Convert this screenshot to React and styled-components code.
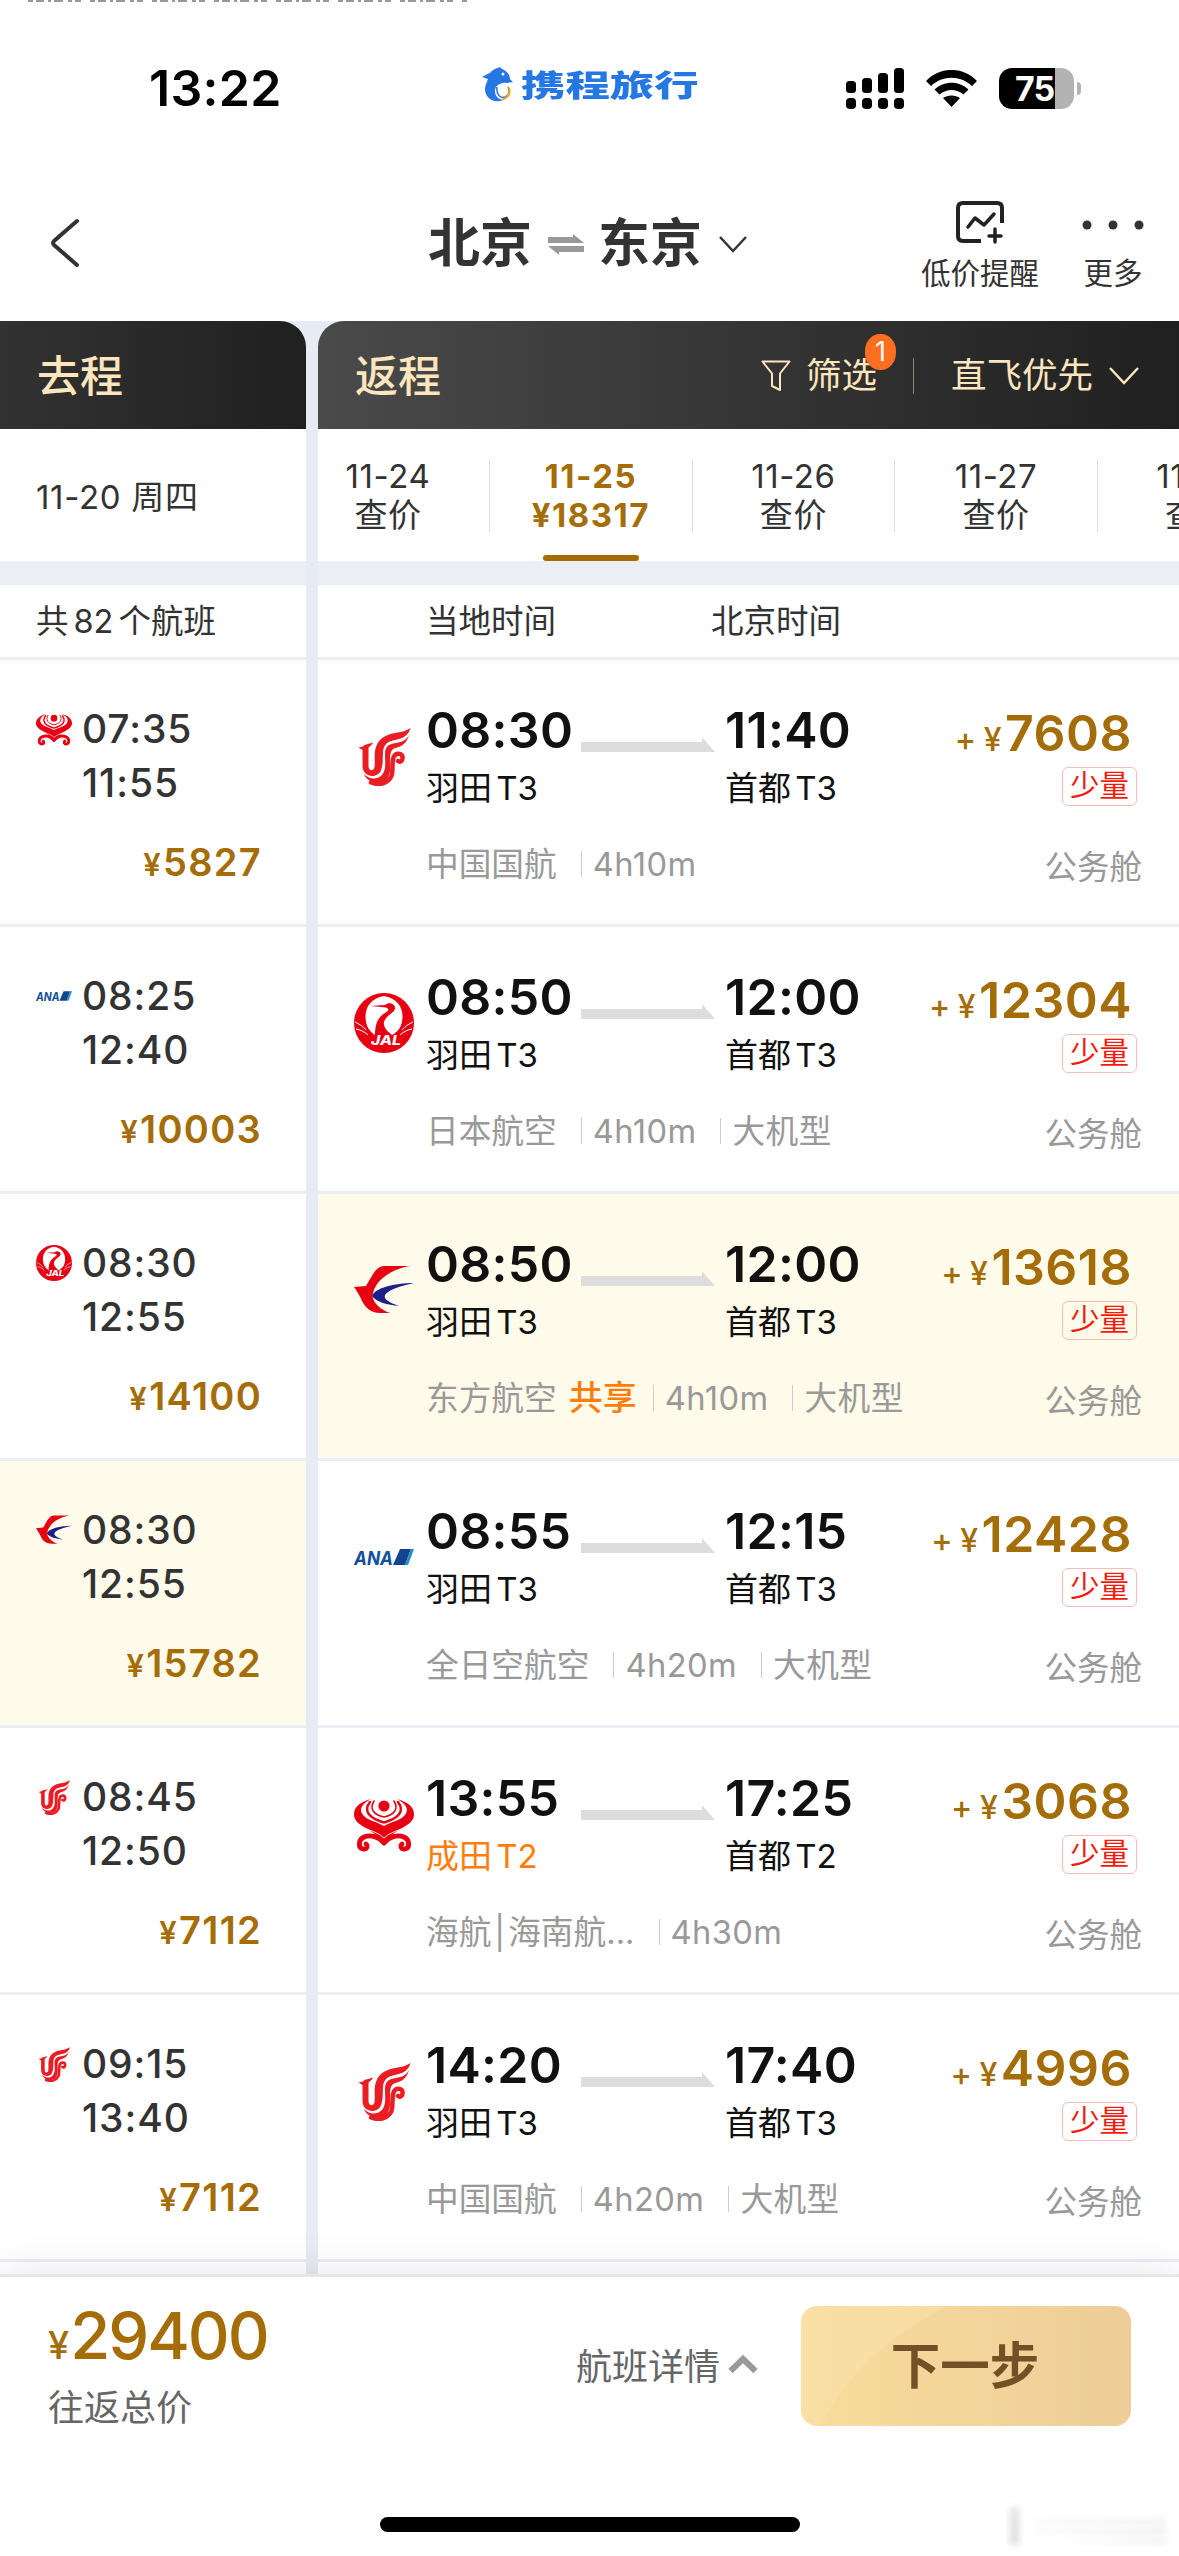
import styled, { createGlobalStyle } from "styled-components";

const GlobalStyle = createGlobalStyle`
  * {
    box-sizing: border-box;
  }

  body {
    margin: 0;
    background: #fff;
    font-family: Inter, "Noto Sans CJK SC", sans-serif;
    color: #333;
  }
`;

const Page = styled.div`
  display: flex;
  flex-direction: column;
  width: 1179px;
  height: 2556px;
  overflow: hidden;
  background: #fff;
`;

/* ---------- status bar ---------- */

const TopEdge = styled.div`
  height: 4px;
  padding-left: 28px;

  svg {
    display: block;
  }
`;

const StatusBar = styled.div`
  display: flex;
  align-items: center;
  height: 168px;
  padding: 0 98px 0 149px;
`;

const Clock = styled.div`
  width: 333px;
  font-size: 50px;
  font-weight: 600;
  line-height: 60px;
  letter-spacing: 0.3px;
  color: #000;
`;

const Brand = styled.div`
  display: flex;
  align-items: center;
  gap: 8px;
  width: 364px;
  height: 42px;
  margin-top: -7px;
`;

const BrandName = styled.div`
  font-size: 30px;
  font-weight: 900;
  line-height: 38px;
  color: #2577e3;
  transform: scaleX(1.48);
  transform-origin: left center;
`;

const StatusIcons = styled.div`
  display: flex;
  align-items: center;
  gap: 22px;
`;

const Battery = styled.div`
  display: flex;
  align-items: center;
  gap: 3px;
`;

const BatteryCell = styled.div`
  width: 75px;
  height: 41px;
  padding-left: 16px;
  border-radius: 13px;
  background: linear-gradient(to right, #000 56px, #b3b3b3 56px);
  font-size: 34px;
  font-weight: 700;
  line-height: 42px;
  letter-spacing: -1px;
  color: #fff;
`;

const BatteryCap = styled.div`
  width: 4px;
  height: 13px;
  border-radius: 0 6px 6px 0;
  background: #b3b3b3;
`;

/* ---------- title bar ---------- */

const TitleBar = styled.div`
  display: flex;
  height: 149px;
  padding-left: 49px;
`;

const BackButton = styled.div`
  width: 379px;
  padding-top: 45px;
`;

const Route = styled.div`
  display: flex;
  align-items: center;
  width: 492px;
  height: 60px;
  margin-top: 42px;
  font-size: 52px;
  font-weight: 600;
  line-height: 60px;

  svg:nth-of-type(1) {
    margin: 0 14px 0 16px;
  }

  svg:nth-of-type(2) {
    margin: 0 0 0 17px;
  }
`;

const Action = styled.div`
  display: flex;
  flex-direction: column;
  align-items: center;
  width: ${(p) => p.$width}px;
  margin-right: ${(p) => p.$gap || 0}px;
  padding-top: 28px;
  font-size: 29.5px;
  line-height: 40px;
  white-space: nowrap;

  svg {
    margin-bottom: 8px;
  }
`;

/* ---------- columns ---------- */

const Columns = styled.div`
  display: flex;
  gap: 12px;
  height: 1953px;
  background: #e6ebf4;
`;

const Column = styled.div`
  display: flex;
  flex-direction: column;
  width: ${(p) => p.$width}px;
  overflow: hidden;
`;

const ColumnHead = styled.div`
  display: flex;
  align-items: center;
  flex-shrink: 0;
  height: 108px;
  padding-top: 1px;
  padding-left: 37px;
  border-radius: ${(p) => p.$radius};
  background: linear-gradient(to right, ${(p) => p.$from}, #202020);
  font-size: 43px;
  font-weight: 500;
  line-height: 60px;
  color: #fde5bd;
`;

const HeadTools = styled.div`
  display: flex;
  align-items: center;
  margin-left: auto;
  padding-right: 40px;
  font-size: 35.5px;
  font-weight: 400;
`;

const FilterLabel = styled.div`
  position: relative;
  margin-left: 15px;
`;

const Badge = styled.div`
  position: absolute;
  top: -12px;
  right: -19px;
  width: 31px;
  height: 36px;
  border-radius: 15px / 17px;
  background: #ff6f1f;
  font-size: 27px;
  line-height: 36px;
  text-align: center;
  color: #fff;
`;

const ToolDivider = styled.div`
  width: 1px;
  height: 36px;
  margin: 0 37px 0 36px;
  background: #8d8371;
`;

const DateBar = styled.div`
  display: flex;
  align-items: center;
  flex-shrink: 0;
  height: 132px;
  padding-left: ${(p) => p.$inset || 0}px;
  background: #fff;
  font-size: 33px;
  letter-spacing: 0.7px;
`;

const DateTab = styled.div`
  display: flex;
  flex-direction: column;
  align-items: center;
  flex-shrink: 0;
  width: ${(p) => (p.$first ? 172 : 202.6)}px;
  height: 132px;
  padding-top: 28px;
  padding-right: ${(p) => (p.$first ? 32 : 1)}px;
  background: linear-gradient(#dcdfe6, #dcdfe6) right 30px / 1px 73px no-repeat;
  font-size: 33px;
  font-weight: ${(p) => (p.$active ? 700 : 400)};
  line-height: 39px;
  letter-spacing: ${(p) => (p.$active ? 1.5 : 0.6)}px;
  white-space: nowrap;
  color: ${(p) => (p.$active ? "#a46d08" : "#333")};
`;

const ActiveLine = styled.div`
  width: 96px;
  height: 6px;
  margin-top: 20px;
  border-radius: 3px;
  background: #a46d08;
`;

const Spacer = styled.div`
  flex-shrink: 0;
  height: 24px;
  background: #ebeef5;
`;

const ListHead = styled.div`
  display: flex;
  align-items: center;
  flex-shrink: 0;
  height: 75px;
  padding-top: 2px;
  padding-left: ${(p) => p.$inset}px;
  border-bottom: 3px solid #ebeef4;
  background: #fff;
  font-size: 32.5px;
  line-height: 40px;

  span {
    width: 285px;
  }

  b {
    margin: 0 5px;
    font-weight: 400;
  }
`;

const ListTail = styled.div`
  flex: 1;
  background: #fff;
`;

/* ---------- outbound rows ---------- */

const OutRow = styled.div`
  display: flex;
  flex-shrink: 0;
  gap: 10px;
  height: 267px;
  padding: 42px 44px 0 36px;
  border-bottom: 3px solid #ebeef4;
  background: ${(p) => (p.$selected ? "#fefbea" : "#fff")};

  svg {
    margin-top: 9px;
    flex-shrink: 0;
  }
`;

const OutInfo = styled.div`
  flex: 1;
  font-size: 39px;
  font-weight: 500;
  line-height: 54px;
  letter-spacing: 0.9px;
`;

const OutPrice = styled.div`
  margin-top: 25px;
  font-size: 38px;
  font-weight: 600;
  letter-spacing: 1.3px;
  text-align: right;
  color: #a46d08;

  small {
    margin-right: 1px;
    font-size: 31px;
    line-height: 1;
  }
`;

/* ---------- return rows ---------- */

const BackRow = styled.div`
  display: flex;
  flex-shrink: 0;
  gap: 12px;
  height: 267px;
  padding: 40px 37px 0 36px;
  border-bottom: 3px solid #ebeef4;
  background: ${(p) => (p.$selected ? "#fefbea" : "#fff")};
`;

const CarrierLogo = styled.div`
  width: 60px;
  height: 60px;
  margin-top: 26px;
`;

const BackInfo = styled.div`
  flex: 1;
`;

const Line = styled.div`
  display: flex;
  justify-content: space-between;
`;

const Leg = styled.div`
  display: flex;

  svg {
    margin: 37px 10px 0 0;
  }
`;

const Stop = styled.div`
  width: ${(p) => p.$width}px;
  white-space: nowrap;
`;

const Time = styled.div`
  font-size: 50px;
  font-weight: 600;
  line-height: 60px;
  letter-spacing: 0.3px;
  color: #111;
`;

const Airport = styled.div`
  margin-top: 8px;
  font-size: 33px;
  line-height: 40px;
  word-spacing: -5px;
  color: ${(p) => (p.$warn ? "#ff7d0a" : "#111")};
`;

const PriceBox = styled.div`
  display: flex;
  flex-direction: column;
  align-items: flex-end;
  height: 108px;
  padding-top: 3px;
`;

const Price = styled.div`
  margin-right: 10px;
  font-size: 50px;
  font-weight: 600;
  line-height: 60px;
  letter-spacing: 0.5px;
  white-space: nowrap;
  color: #a46d08;

  small {
    font-size: 32px;
    font-weight: 500;
    line-height: 1;
  }

  small + small {
    margin: 0 3px 0 7px;
  }
`;

const Tag = styled.div`
  flex-shrink: 0;
  height: 39px;
  margin: 4px 5px 0 0;
  padding: 0 7px;
  border: 1px solid #f6bcb8;
  border-radius: 6px;
  font-size: 29.5px;
  line-height: 35px;
  color: #f5190a;
`;

const Meta = styled.div`
  display: flex;
  align-items: center;
  height: 40px;
  margin-top: 36px;
  font-size: 32.7px;
  line-height: 40px;
  white-space: nowrap;
  color: #999;
`;

const MetaItem = styled.span`
  margin-left: ${(p) => (p.$first ? 0 : 24)}px;
  padding-left: ${(p) => (p.$first ? 0 : 12)}px;
  letter-spacing: ${(p) => (p.$first ? 0 : 0.4)}px;
  background: ${(p) =>
    p.$first
      ? "none"
      : "linear-gradient(#ccc, #ccc) left 7px / 1px 26px no-repeat"};
`;

const Shared = styled.span`
  margin: 0 -8px 0 12px;
  font-size: 34px;
  font-weight: 500;
  line-height: 1;
  color: #ff7d0a;
`;

const Cabin = styled.div`
  margin-top: 40px;
  font-size: 32.5px;
  line-height: 40px;
  color: #999;
`;

/* ---------- footer ---------- */

const Footer = styled.div`
  position: relative;
  display: flex;
  height: 230px;
  padding-left: 48px;
  border-top: 3px solid #e6e7e9;
  background: #fff;
  box-shadow: 0 0 42px rgba(0, 0, 0, 0.1);
`;

const Total = styled.div`
  width: 528px;
  padding-top: 23px;
  font-size: 65px;
  font-weight: 500;
  line-height: 72px;
  letter-spacing: -2px;
  color: #a46d08;

  small {
    margin-right: 3px;
    font-size: 38px;
    line-height: 1;
  }

  div {
    margin-top: 14px;
    font-size: 36px;
    font-weight: 400;
    line-height: 44px;
    letter-spacing: 0;
    color: #666;
  }
`;

const Details = styled.div`
  display: flex;
  align-items: center;
  gap: 8px;
  width: 225px;
  height: 60px;
  margin-top: 57px;
  font-size: 36px;
  color: #666;
`;

const NextButton = styled.div`
  width: 330px;
  height: 120px;
  margin-top: 29px;
  padding-right: 2px;
  border-radius: 16px;
  background: radial-gradient(
      circle at 250px 240px,
      rgba(252, 230, 182, 0) 259px,
      rgba(252, 230, 182, 0.35) 261px
    ),
    linear-gradient(to right, #f9dc9c, #eecd98);
  font-size: 49.5px;
  font-weight: 600;
  line-height: 121px;
  text-align: center;
  color: #754f25;
`;

const HomeArea = styled.div`
  display: flex;
  flex: 1;
  justify-content: flex-end;
  background: #fff;
  z-index: 1;
`;

const HomeBar = styled.div`
  width: 420px;
  height: 15px;
  margin: 13px 208px 0 0;
  border-radius: 8px;
  background: #000;
`;

const Watermark = styled.div`
  width: 158px;
  height: 38px;
  margin: 3px 13px 0 0;
  filter: blur(3px);
  background:
    linear-gradient(#e4e4e4, #ddd) 2px 0 / 9px 38px no-repeat,
    linear-gradient(to right, #fafafa, #eee) 26px 12px / 132px 5px no-repeat,
    linear-gradient(to right, #fafafa, #e6e6e6) 26px 22px / 132px 4px no-repeat,
    linear-gradient(to right, #fff, #e9e9e9) 40px 32px / 118px 4px no-repeat;
`;

/* ---------- airline logos ---------- */

function HainanLogo({ size }) {
  return (
    <svg width={size} height={size} viewBox="0 0 60 60" fill="none">
      <g fill="#e60012">
        <circle cx="30" cy="12" r="5.6" />
        <path d="M17 5C6 8 0 13 0 20.500C0 32 18 34 30 48C42 34 60 32 60 20.500C60 13 54 8 43 5C53 10 55 16 51 21C46 27 36 28 30 32C24 28 14 27 9 21C5 16 7 10 17 5Z" />
      </g>
      <g stroke="#e60012" strokeLinecap="round">
        <path d="M16 8C9 17 15 24 30 28.500C45 24 51 17 44 8" strokeWidth="2.400" />
        <path d="M20 7C15 15 20 21 30 23C40 21 45 15 40 7" strokeWidth="1.600" />
        <path
          d="M30 49C24 42 16 40.500 10 43C4 46 4 54 9 55C13 55.500 14 52 12 50"
          strokeWidth="4.800"
        />
        <path
          d="M30 49C36 42 44 40.500 50 43C56 46 56 54 51 55C47 55.500 46 52 48 50"
          strokeWidth="4.800"
        />
      </g>
      <path d="M2 28C8 36 22 36 30 44C38 36 52 36 58 28" stroke="#fff" strokeWidth="0.9" />
    </svg>
  );
}

function AirChinaLogo({ size }) {
  return (
    <svg width={size} height={size} viewBox="0 0 60 60" fill="#ea1c24">
      <path d="M4.500 21.500L9 20.500C11 17.500 15 18.500 19 16.500C18 20 14.500 20 14.500 22.500V40C14.500 45 19.500 46 20.500 41C21.500 35 19.500 28 22 21C25 10.500 36 7.500 44 6.500C50 5.500 53 4 56.500 2C54.500 9 50 12 43 13.500C34 15 29.500 18 29 26C28.500 33 29.500 39 26.500 45.500C22 53 8.500 51 8.500 40V24Z" />
      <path d="M55 9C52 14.500 48 16 42 17C34 18 31 21 31 28C31 38 32.500 43 28 49C22 55 14 52.500 10 48C13 56 24 60 32 54C37.500 48 36 40 36 32C36.500 25 38 22.500 43 21.500C49 20 53 16 55 9Z" />
      <path
        d="M17 56.500C26 60 34 57 37.500 50C39.500 43 37.500 37 39.500 31.500C41.500 26 48 27 48.500 31C49 35 46 36.500 44 35"
        fill="none"
        stroke="#ea1c24"
        strokeWidth="4.500"
        strokeLinecap="round"
      />
    </svg>
  );
}

function JalLogo({ size }) {
  return (
    <svg width={size} height={size} viewBox="0 0 60 60">
      <circle cx="30" cy="30" r="30" fill="#e60012" />
      <path
        d="M30 3C18 5 11 13 11.500 25C12 33 15 38 21 42H38C45 38 48 33 48.500 25C49 13 42 5 30 3Z"
        fill="#fff"
      />
      <path
        d="M16.500 13L31 12C35 8.500 41 11 41 15C41 20 32 22 30 29C29 34 33 38 38 42H21C21 31 24 24 31 20C35 18 35.500 15.500 32 14.500Z"
        fill="#e60012"
      />
      <g stroke="#fff" strokeWidth="1" fill="none">
        <path d="M1 29C5 31 9 33 12 37" />
        <path d="M2 36C7 37 11 39 14 42" />
        <path d="M59 29C55 31 51 33 48 37" />
        <path d="M58 36C53 37 49 39 46 42" />
      </g>
      <text
        x="17"
        y="52"
        textLength="30"
        lengthAdjust="spacingAndGlyphs"
        fontFamily="Inter"
        fontSize="13"
        fontWeight="800"
        fontStyle="italic"
        fill="#fff"
      >
        JAL
      </text>
    </svg>
  );
}

function EasternLogo({ size }) {
  return (
    <svg width={size} height={size} viewBox="0 0 60 60">
      <path
        d="M56 6H30C22 6 18 16 12 26L0 27C4 33 6 36 8 41C12 49 18 53 26 53H36C27 50 19 43 18.500 36C20 22 34 10 56 6Z"
        fill="#e60012"
      />
      <path
        d="M60 23C40 23 21 28 18 36C22 42 34 45 45 46C34 42 29.500 39 31 35C34 30 46 26 60 23Z"
        fill="#1d2088"
      />
    </svg>
  );
}

function AnaLogo({ size }) {
  return (
    <svg width={size} height={size} viewBox="0 0 60 60">
      <text
        x="0"
        y="37.500"
        textLength="39"
        lengthAdjust="spacingAndGlyphs"
        fontFamily="Inter"
        fontSize="19"
        fontWeight="700"
        fontStyle="italic"
        fill="#13509b"
      >
        ANA
      </text>
      <path d="M46 22H57L51 38H39Z" fill="#13448f" />
      <path d="M57 22H60L54 38H51Z" fill="#1f8fc4" />
    </svg>
  );
}

const logos = {
  hainan: HainanLogo,
  airChina: AirChinaLogo,
  jal: JalLogo,
  eastern: EasternLogo,
  ana: AnaLogo,
};

/* ---------- data ---------- */

const outbound = [
  { logo: "hainan", depart: "07:35", arrive: "11:55", price: "5827" },
  { logo: "ana", depart: "08:25", arrive: "12:40", price: "10003" },
  { logo: "jal", depart: "08:30", arrive: "12:55", price: "14100" },
  {
    logo: "eastern",
    depart: "08:30",
    arrive: "12:55",
    price: "15782",
    selected: true,
  },
  { logo: "airChina", depart: "08:45", arrive: "12:50", price: "7112" },
  { logo: "airChina", depart: "09:15", arrive: "13:40", price: "7112" },
];

const inbound = [
  {
    logo: "airChina",
    depart: "08:30",
    from: "羽田 T3",
    arrive: "11:40",
    to: "首都 T3",
    price: "7608",
    meta: ["中国国航", "4h10m"],
  },
  {
    logo: "jal",
    depart: "08:50",
    from: "羽田 T3",
    arrive: "12:00",
    to: "首都 T3",
    price: "12304",
    meta: ["日本航空", "4h10m", "大机型"],
  },
  {
    logo: "eastern",
    depart: "08:50",
    from: "羽田 T3",
    arrive: "12:00",
    to: "首都 T3",
    price: "13618",
    meta: ["东方航空", "4h10m", "大机型"],
    shared: true,
    selected: true,
  },
  {
    logo: "ana",
    depart: "08:55",
    from: "羽田 T3",
    arrive: "12:15",
    to: "首都 T3",
    price: "12428",
    meta: ["全日空航空", "4h20m", "大机型"],
  },
  {
    logo: "hainan",
    depart: "13:55",
    from: "成田 T2",
    arrive: "17:25",
    to: "首都 T2",
    price: "3068",
    meta: ["海航\u200a|\u200a海南航...", "4h30m"],
    warn: true,
  },
  {
    logo: "airChina",
    depart: "14:20",
    from: "羽田 T3",
    arrive: "17:40",
    to: "首都 T3",
    price: "4996",
    meta: ["中国国航", "4h20m", "大机型"],
  },
];

const dates = [
  { day: "11-24", label: "查价" },
  { day: "11-25", label: "¥18317", active: true },
  { day: "11-26", label: "查价" },
  { day: "11-27", label: "查价" },
  { day: "11-28", label: "查价" },
];

function OutboundFlight({ flight }) {
  const Logo = logos[flight.logo];

  return (
    <OutRow $selected={flight.selected}>
      <Logo size={36} />
      <OutInfo>
        <div>{flight.depart}</div>
        <div>{flight.arrive}</div>
        <OutPrice>
          <small>¥</small>
          {flight.price}
        </OutPrice>
      </OutInfo>
    </OutRow>
  );
}

function InboundFlight({ flight }) {
  const Logo = logos[flight.logo];

  return (
    <BackRow $selected={flight.selected}>
      <CarrierLogo>
        <Logo size={60} />
      </CarrierLogo>
      <BackInfo>
        <Line>
          <Leg>
            <Stop $width={155}>
              <Time>{flight.depart}</Time>
              <Airport $warn={flight.warn}>{flight.from}</Airport>
            </Stop>
            <svg width="134" height="16" viewBox="0 0 134 16" fill="#ddd">
              <path d="M0 5H121V0L134 15H0Z" />
            </svg>
            <Stop $width={150}>
              <Time>{flight.arrive}</Time>
              <Airport>{flight.to}</Airport>
            </Stop>
          </Leg>
          <PriceBox>
            <Price>
              <small>+</small>
              <small>¥</small>
              {flight.price}
            </Price>
            <Tag>少量</Tag>
          </PriceBox>
        </Line>
        <Line>
          <Meta>
            {flight.meta.map((item, i) => (
              <MetaItem key={item} $first={i === 0}>
                {item}
                {flight.shared && i === 0 ? <Shared>共享</Shared> : null}
              </MetaItem>
            ))}
          </Meta>
          <Cabin>公务舱</Cabin>
        </Line>
      </BackInfo>
    </BackRow>
  );
}

export default function App() {
  return (
    <>
      <GlobalStyle />
      <Page>
        <TopEdge>
          <svg width="440" height="3" fill="none">
            <path
              d="M0 1H440"
              stroke="#999"
              strokeWidth="2"
              strokeDasharray="5 3 8 4 3 3 9 5 4 3 6 9"
            />
          </svg>
        </TopEdge>
        <StatusBar>
          <Clock>13:22</Clock>
          <Brand>
            <svg width="31" height="36" viewBox="0 0 31 36">
              <path
                d="M0 10C3 9 4 7 8 6C10 3 15 1 18 0L20 2C25 4 28 8 28 12L31 15L25 16C18 15 13 19 13 24C13 29 16 32 21 33C12 37 3 31 3 22C3 18 5 15 6 12Z"
                fill="#2577e3"
              />
              <path
                d="M15 20C14 27 18 32 23 30C27 28 28 24 26 20"
                stroke="#2577e3"
                strokeWidth="1.500"
                fill="none"
              />
              <path d="M26 19C32 24 27 34 18 33C24 31 28 26 26 19Z" fill="#f5a21d" />
              <circle cx="21" cy="7" r="1.500" fill="#fff" />
            </svg>
            <BrandName>携程旅行</BrandName>
          </Brand>
          <StatusIcons>
            <svg width="58" height="41" viewBox="0 0 58 41">
              <rect x="0" y="13" width="10" height="12" rx="3.500" />
              <rect x="16" y="10" width="10" height="15" rx="3.500" />
              <rect x="32" y="5" width="10" height="20" rx="3.500" />
              <rect x="48" y="0" width="10" height="25" rx="3.500" />
              <rect x="0" y="30" width="10" height="11" rx="4" />
              <rect x="16" y="30" width="10" height="11" rx="4" />
              <rect x="32" y="30" width="10" height="11" rx="4" />
              <rect x="48" y="30" width="10" height="11" rx="4" />
            </svg>
            <svg width="51" height="37" viewBox="0 0 51 37">
              <path d="M0 11C14 -3.700 37 -3.700 51 11L46 16C34.500 5 16.500 5 5 16Z" />
              <path d="M8.500 19.500C18 10.500 33 10.500 42.500 19.500L37.500 24.500C30.500 18.500 20.500 18.500 13.500 24.500Z" />
              <path d="M17 28C21.500 24.500 29.500 24.500 34 28L25.500 37Z" />
            </svg>
            <Battery>
              <BatteryCell>75</BatteryCell>
              <BatteryCap />
            </Battery>
          </StatusIcons>
        </StatusBar>

        <TitleBar>
          <BackButton>
            <svg width="32" height="52" viewBox="0 0 32 52" fill="none">
              <path
                d="M28 4L5 24Q3 26 5 28L28 48"
                stroke="#333"
                strokeWidth="4"
                strokeLinecap="round"
              />
            </svg>
          </BackButton>
          <Route>
            北京
            <svg width="36" height="21" viewBox="0 0 36 21" fill="#999">
              <path d="M0 3H25V0L36 9H0Z" />
              <path d="M0 12H36V18H11V21Z" />
            </svg>
            东京
            <svg width="28" height="17" viewBox="0 0 28 17" fill="none">
              <path d="M1 1L14 15L27 1" stroke="#333" strokeWidth="2.500" />
            </svg>
          </Route>
          <Action $width={120} $gap={42}>
            <svg width="50" height="45" viewBox="0 0 50 45" fill="none">
              <g stroke="#222" strokeWidth="4" strokeLinecap="round">
                <path
                  d="M26 41H8Q3 41 3 36V8Q3 3 8 3H42Q47 3 47 8V23"
                  strokeLinecap="butt"
                />
                <path
                  d="M13 27L20 18L29 25L39 14"
                  strokeWidth="3.500"
                  strokeLinejoin="round"
                />
                <path d="M34 36H46M40 29V42" strokeWidth="3.500" />
              </g>
            </svg>
            低价提醒
          </Action>
          <Action $width={62}>
            <svg width="62" height="45" viewBox="0 0 62 45" fill="#333">
              <circle cx="5" cy="25" r="4.500" />
              <circle cx="31" cy="25" r="4.500" />
              <circle cx="57" cy="25" r="4.500" />
            </svg>
            更多
          </Action>
        </TitleBar>

        <Columns>
          <Column $width={306}>
            <ColumnHead $from="#323232" $radius="0 26px 0 0">
              去程
            </ColumnHead>
            <DateBar $inset={36}>11-20 周四</DateBar>
            <Spacer />
            <ListHead $inset={36}>
              共<b>82</b>个航班
            </ListHead>
            {outbound.map((flight, i) => (
              <OutboundFlight key={i} flight={flight} />
            ))}
            <ListTail />
          </Column>

          <Column $width={861}>
            <ColumnHead $from="#4a4a4a" $radius="26px 0 0 0">
              返程
              <HeadTools>
                <svg width="30" height="32" viewBox="0 0 30 32" fill="none">
                  <path
                    d="M1.500 1.500H28.500L19 13.500V30L11 26V13.500Z"
                    stroke="#fde5bd"
                    strokeWidth="2"
                    strokeLinejoin="round"
                  />
                </svg>
                <FilterLabel>
                  筛选
                  <Badge>1</Badge>
                </FilterLabel>
                <ToolDivider />
                直飞优先
                <svg
                  width="46"
                  height="18"
                  viewBox="-16 0 46 18"
                  fill="none"
                >
                  <path d="M1 1L15 16L29 1" stroke="#fde5bd" strokeWidth="2.500" />
                </svg>
              </HeadTools>
            </ColumnHead>
            <DateBar>
              {dates.map((date, i) => (
                <DateTab key={date.day} $active={date.active} $first={i === 0}>
                  <span>{date.day}</span>
                  <span>{date.label}</span>
                  {date.active ? <ActiveLine /> : null}
                </DateTab>
              ))}
            </DateBar>
            <Spacer />
            <ListHead $inset={108}>
              <span>当地时间</span>
              <span>北京时间</span>
            </ListHead>
            {inbound.map((flight, i) => (
              <InboundFlight key={i} flight={flight} />
            ))}
            <ListTail />
          </Column>
        </Columns>

        <Footer>
          <Total>
            <small>¥</small>29400
            <div>往返总价</div>
          </Total>
          <Details>
            航班详情
            <svg width="30" height="20" viewBox="0 0 30 20" fill="none">
              <path d="M2.500 17L15 5L27.500 17" stroke="#999" strokeWidth="6" />
            </svg>
          </Details>
          <NextButton>下一步</NextButton>
        </Footer>
        <HomeArea>
          <HomeBar />
          <Watermark />
        </HomeArea>
      </Page>
    </>
  );
}
